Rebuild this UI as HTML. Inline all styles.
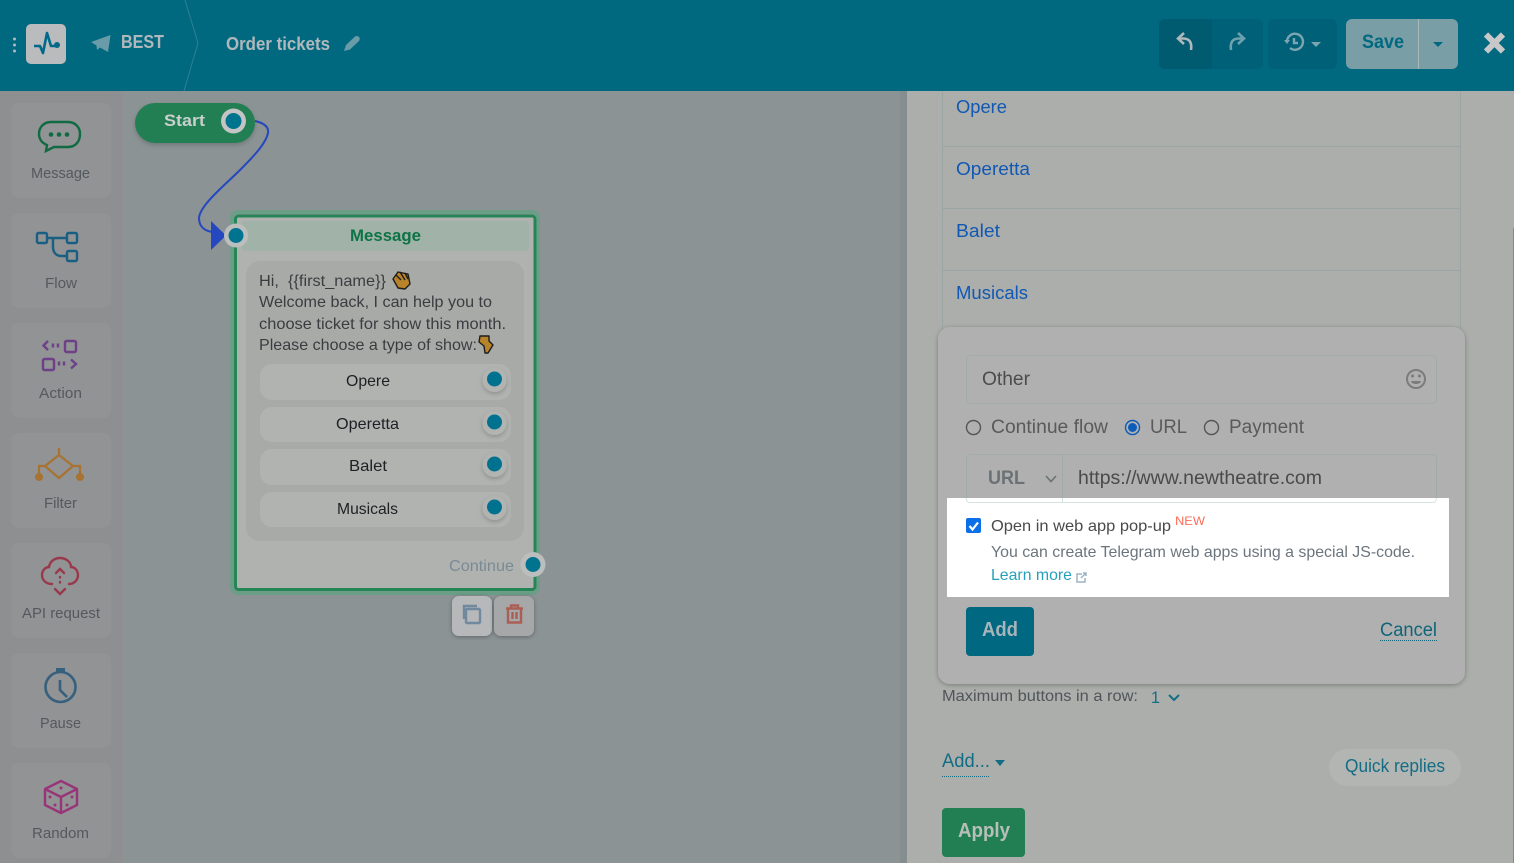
<!DOCTYPE html>
<html><head><meta charset="utf-8"><style>
html,body{margin:0;padding:0;background:#8b9395;overflow:hidden}
svg{display:block;position:absolute;left:0;top:0}
text{font-family:"Liberation Sans",sans-serif;white-space:pre}
.b{font-weight:bold}
.side{font-size:15px;fill:#54595d}
.flab{font-size:18px;fill:#1058b4}
</style></head><body>
<svg width="1514" height="863" viewBox="0 0 1514 863" xmlns="http://www.w3.org/2000/svg">
<defs>
<filter id="sh" x="-20%" y="-20%" width="140%" height="140%"><feDropShadow dx="0" dy="2" stdDeviation="2.500" flood-color="#000" flood-opacity=".2"/></filter>
<filter id="sh2" x="-10%" y="-10%" width="120%" height="120%"><feDropShadow dx="0" dy="1" stdDeviation="2.500" flood-color="#000" flood-opacity=".3"/></filter>
</defs>
<!-- canvas -->
<rect width="1514" height="863" fill="#8b9395"/>
<rect x="0" y="91" width="123" height="772" fill="#8d8f91"/>
<g fill="#919395">
<rect x="11" y="103" width="100" height="95" rx="8"/><rect x="11" y="213" width="100" height="95" rx="8"/><rect x="11" y="323" width="100" height="95" rx="8"/><rect x="11" y="433" width="100" height="95" rx="8"/><rect x="11" y="543" width="100" height="95" rx="8"/><rect x="11" y="653" width="100" height="95" rx="8"/><rect x="11" y="763" width="100" height="95" rx="8"/>
</g>
<text class="side" x="31" y="178" textLength="59" lengthAdjust="spacingAndGlyphs">Message</text>
<text class="side" x="45" y="288" textLength="32" lengthAdjust="spacingAndGlyphs">Flow</text>
<text class="side" x="39" y="398" textLength="43" lengthAdjust="spacingAndGlyphs">Action</text>
<text class="side" x="44" y="508" textLength="33" lengthAdjust="spacingAndGlyphs">Filter</text>
<text class="side" x="22" y="618" textLength="78" lengthAdjust="spacingAndGlyphs">API request</text>
<text class="side" x="40" y="728" textLength="41" lengthAdjust="spacingAndGlyphs">Pause</text>
<text class="side" x="32" y="838" textLength="57" lengthAdjust="spacingAndGlyphs">Random</text>
<!-- sidebar icons -->
<g fill="none" stroke="#106b42" stroke-width="2.400"><path d="M51 122H68C75 122 80 127 80 134C80 142 75 147 68 147H54L46 151L47 145C42 143 39 139 39 134C39 127 44 122 51 122Z"/></g>
<g fill="#106b42"><circle cx="51" cy="134.500" r="2.300"/><circle cx="59" cy="134.500" r="2.300"/><circle cx="67" cy="134.500" r="2.300"/></g>
<g fill="none" stroke="#195f83" stroke-width="2.400"><rect x="37" y="233" width="10" height="10" rx="1.500"/><rect x="67" y="233" width="10" height="10" rx="1.500"/><rect x="67" y="251" width="10" height="10" rx="1.500"/><path d="M47 238H67M53 238V247C53 252 56 256 61 256H67"/></g>
<g fill="none" stroke="#6d4088" stroke-width="2.400"><rect x="65" y="341" width="11" height="11" rx="1.500"/><rect x="43" y="359" width="11" height="11" rx="1.500"/><path d="M48 341L43.500 345.500L48 350M53 343.500V347.500M58 343.500V347.500M59 361.500V365.500M64 361.500V365.500M71 359.500L76 364L71 368.500"/></g>
<g fill="none" stroke="#a87230" stroke-width="2.200"><path d="M59 448V455M45 466L59 455L73 466L59 478ZM45 466H39V474M73 466H80V474"/></g>
<g fill="#a87230"><circle cx="39" cy="477" r="4"/><circle cx="80" cy="477" r="4"/></g>
<g fill="none" stroke="#983a4c" stroke-width="2.400" stroke-linecap="round"><path d="M52 584C46 584 42 580 42 575C42 570 46 567 49 567C50 561 55 558 60 558C66 558 71 562 71 567C75 567 78 571 78 575C78 580 74 584 69 584"/><path d="M56 573L60 569L64 573M60 577V577.500M60 582V582.500M55 589L60 594L65 589"/></g>
<g fill="none" stroke="#375f7e" stroke-width="2.600"><circle cx="60.500" cy="687" r="15"/><path d="M60 680V690L67 697"/></g><rect x="56" y="668" width="9" height="4" fill="#375f7e"/>
<g fill="none" stroke="#983578" stroke-width="2.400" stroke-linejoin="round"><path d="M61 781L77 789V805L61 813L45 805V789ZM45 789L61 797L77 789M61 797V813"/></g>
<g fill="#983578"><circle cx="61" cy="788" r="1.500"/><circle cx="50" cy="797" r="1.500"/><circle cx="55" cy="805" r="1.500"/><circle cx="67" cy="805" r="1.500"/><circle cx="72" cy="797" r="1.500"/></g>

<!-- flow connector -->
<path d="M255 121C264 123 269 127 268 133C266 143 255 155 240 170C225 185 200 205 199 218C199 226 204 231 213 232" fill="none" stroke="#2547bf" stroke-width="2"/>
<!-- start -->
<rect x="135" y="103" width="120" height="40" rx="20" fill="#217f53" filter="url(#sh)"/>
<text class="b" x="164" y="126" font-size="17" fill="#c8d0cc" textLength="41" lengthAdjust="spacingAndGlyphs">Start</text>
<circle cx="233.500" cy="121" r="12.500" fill="#c4c4c4"/><circle cx="233.500" cy="121" r="8" fill="#00748f"/>
<!-- message node -->
<rect x="232" y="212" width="306" height="381" rx="6" fill="none" stroke="#6b9e86" stroke-width="4"/>
<rect x="235.500" y="216" width="299.500" height="373.500" rx="3" fill="#b0b2b0" stroke="#268557" stroke-width="3"/>
<rect x="242" y="221" width="287" height="30" rx="3" fill="#a1b3a9"/>
<text class="b" x="350" y="241" font-size="17" fill="#0e7344" textLength="71" lengthAdjust="spacingAndGlyphs">Message</text>
<rect x="246" y="261" width="278" height="280" rx="14" fill="#a8aaa8"/>
<g font-size="16" fill="#3c3c40">
<text x="259" y="286" textLength="127" lengthAdjust="spacingAndGlyphs">Hi,  {{first_name}}</text>
<text x="259" y="307" textLength="233" lengthAdjust="spacingAndGlyphs">Welcome back, I can help you to</text>
<text x="259" y="329" textLength="247" lengthAdjust="spacingAndGlyphs">choose ticket for show this month.</text>
<text x="259" y="350" textLength="218" lengthAdjust="spacingAndGlyphs">Please choose a type of show:</text>
</g>
<!-- clap emoji -->
<g stroke="#1d1d1d" stroke-width="1.400" stroke-linejoin="round"><path d="M393 279L398 272L408 274L410 284L405 289L398 288Z" fill="#b9832a"/><path d="M396 275L401 280M400 272L405 280M405 273L408 279" fill="none"/></g>
<!-- point emoji -->
<path d="M480 336H489V341L493 345L488 353H485L484 346L479 342Z" fill="#b9832a" stroke="#1d1d1d" stroke-width="1.400" stroke-linejoin="round"/>
<!-- buttons -->
<g fill="#b1b3b1"><rect x="260" y="364" width="251" height="36" rx="12"/><rect x="260" y="407" width="251" height="35" rx="12"/><rect x="260" y="449" width="251" height="36" rx="12"/><rect x="260" y="492" width="251" height="35" rx="12"/></g>
<g font-size="16" fill="#1f1f24">
<text x="346" y="386" textLength="44" lengthAdjust="spacingAndGlyphs">Opere</text>
<text x="336" y="429" textLength="63" lengthAdjust="spacingAndGlyphs">Operetta</text>
<text x="349" y="471" textLength="38" lengthAdjust="spacingAndGlyphs">Balet</text>
<text x="337" y="514" textLength="61" lengthAdjust="spacingAndGlyphs">Musicals</text>
</g>
<g fill="#b2b4b2" filter="url(#sh)"><circle cx="494.500" cy="380" r="12"/><circle cx="494.500" cy="423" r="12"/><circle cx="494.500" cy="465" r="12"/><circle cx="494.500" cy="508" r="12"/></g>
<g fill="#00728f"><circle cx="494.500" cy="379" r="7.500"/><circle cx="494.500" cy="422" r="7.500"/><circle cx="494.500" cy="464" r="7.500"/><circle cx="494.500" cy="507" r="7.500"/></g>
<text x="449" y="571" font-size="16" fill="#7a8a94" textLength="65" lengthAdjust="spacingAndGlyphs">Continue</text>
<circle cx="533" cy="564.500" r="12.500" fill="#bcbebe"/><circle cx="533" cy="564.500" r="7.500" fill="#00748f"/>
<path d="M211 221L226 235.500L211 250Z" fill="#2547bf"/>
<circle cx="236" cy="235.500" r="12" fill="#bcbebe"/><circle cx="236" cy="235.500" r="7.500" fill="#00748f"/>
<!-- copy / delete -->
<rect x="452" y="596" width="40" height="40" rx="7" fill="#b6b8b9" filter="url(#sh2)"/>
<rect x="494" y="596" width="40" height="40" rx="7" fill="#a5a7a8" filter="url(#sh2)"/>
<g fill="none" stroke="#71899e" stroke-width="2.400"><rect x="466" y="609" width="14" height="14" rx="1"/><path d="M464 619V606H477"/></g>
<g fill="none" stroke="#ab5e54" stroke-width="2.400"><path d="M506 608.500H523M511 608V605.500H518V608M508 609V622.500H521V609M512.500 612V619M516.500 612V619"/></g>

<!-- right panel -->
<rect x="900" y="91" width="7" height="772" fill="#858d8f"/>
<rect x="907" y="91" width="607" height="772" fill="#acaeac"/>
<rect x="1513" y="228" width="1" height="635" fill="#858787"/>
<g stroke="#9aa5a5" stroke-width="1"><path d="M942.500 91V330M1460.500 91V330M942 146.500H1461M942 208.500H1461M942 270.500H1461" fill="none"/></g>
<text class="flab" x="956" y="113" textLength="51" lengthAdjust="spacingAndGlyphs">Opere</text>
<text class="flab" x="956" y="175" textLength="74" lengthAdjust="spacingAndGlyphs">Operetta</text>
<text class="flab" x="956" y="237" textLength="44" lengthAdjust="spacingAndGlyphs">Balet</text>
<text class="flab" x="956" y="299" textLength="72" lengthAdjust="spacingAndGlyphs">Musicals</text>
<!-- lower panel -->
<text x="942" y="701" font-size="16" fill="#4f5558" textLength="196" lengthAdjust="spacingAndGlyphs">Maximum buttons in a row:</text>
<text x="1151" y="703" font-size="17" fill="#126d85" textLength="9" lengthAdjust="spacingAndGlyphs">1</text>
<path d="M1169 695L1174 700L1179 695" fill="none" stroke="#126d85" stroke-width="2"/>
<text x="942" y="767" font-size="19" fill="#136d84" textLength="48" lengthAdjust="spacingAndGlyphs">Add...</text>
<path d="M942 776.500H990" stroke="#136d84" stroke-dasharray="1 1"/>
<path d="M995 760H1005L1000 766Z" fill="#136d84"/>
<rect x="1329" y="749" width="132" height="37" rx="18.500" fill="#b3b5b3"/>
<text x="1345" y="772" font-size="18" fill="#136d84" textLength="100" lengthAdjust="spacingAndGlyphs">Quick replies</text>
<rect x="942" y="808" width="83" height="49" rx="4" fill="#217f53"/>
<text class="b" x="958" y="837" font-size="20" fill="#b8bfb8" textLength="52" lengthAdjust="spacingAndGlyphs">Apply</text>
<!-- modal -->
<rect x="938" y="327" width="527" height="357" rx="12" fill="#b0b0b0" filter="url(#sh2)"/>
<rect x="966.500" y="355.500" width="470" height="48" rx="4" fill="none" stroke="#a1aca9"/>
<text x="982" y="385" font-size="19" fill="#4c4c4c" textLength="48" lengthAdjust="spacingAndGlyphs">Other</text>
<g fill="none" stroke="#7c7c7c" stroke-width="2"><circle cx="1416" cy="379" r="9"/></g>
<g fill="#7c7c7c"><circle cx="1412.500" cy="376" r="1.500"/><circle cx="1419.500" cy="376" r="1.500"/><path d="M1411 381H1421C1420.500 385 1411.500 385 1411 381Z"/></g>
<g fill="none" stroke="#555" stroke-width="1.400"><circle cx="973.500" cy="427.500" r="7"/><circle cx="1211.500" cy="427.500" r="7"/></g>
<circle cx="1132.500" cy="427.500" r="7" fill="none" stroke="#0d5cb8" stroke-width="1.400"/><circle cx="1132.500" cy="427.500" r="4.500" fill="#0d5cb8"/>
<g font-size="19" fill="#5a5a5a">
<text x="991" y="433" textLength="117" lengthAdjust="spacingAndGlyphs">Continue flow</text>
<text x="1150" y="433" textLength="37" lengthAdjust="spacingAndGlyphs">URL</text>
<text x="1229" y="433" textLength="75" lengthAdjust="spacingAndGlyphs">Payment</text>
</g>
<path d="M971 454.500H1432Q1436.500 454.500 1436.500 459V498M966.500 498V459Q966.500 454.500 971 454.500M1062.500 454.500V498" fill="none" stroke="#a1aca9"/>
<text class="b" x="988" y="484" font-size="19" fill="#6b7275" textLength="37" lengthAdjust="spacingAndGlyphs">URL</text>
<path d="M1046 476L1051 481.500L1056 476" fill="none" stroke="#6b7275" stroke-width="1.600"/>
<text x="1078" y="484" font-size="19" fill="#4a4a4a" textLength="244" lengthAdjust="spacingAndGlyphs">https://www.newtheatre.com</text>
<!-- highlighted -->
<rect x="947" y="498" width="502" height="99" fill="#fff"/>
<path d="M966.500 498V499Q966.500 502.500 970 502.500H1432Q1436.500 502.500 1436.500 498M1062.500 498V502" fill="none" stroke="#d5e3e0"/>
<rect x="966" y="518" width="15" height="15" rx="2" fill="#0b6fe8"/>
<path d="M969.500 526L972.500 529.500L978 522.500" fill="none" stroke="#fff" stroke-width="2.200"/>
<text x="991" y="531" font-size="16" fill="#4a4a4a" textLength="180" lengthAdjust="spacingAndGlyphs">Open in web app pop-up</text>
<text x="1175" y="525" font-size="12" fill="#ff6e5c" textLength="30" lengthAdjust="spacingAndGlyphs">NEW</text>
<text x="991" y="557" font-size="16" fill="#6c757d" textLength="424" lengthAdjust="spacingAndGlyphs">You can create Telegram web apps using a special JS-code.</text>
<text x="991" y="580" font-size="16" fill="#26a0bb" textLength="81" lengthAdjust="spacingAndGlyphs">Learn more</text>
<g fill="none" stroke="#9db3c4" stroke-width="1.500"><path d="M1082 574H1077V582H1085V578"/><path d="M1081 578L1086 573M1083 573H1086V576"/></g>
<rect x="966" y="607" width="68" height="49" rx="4" fill="#006880"/>
<text class="b" x="982" y="636" font-size="20" fill="#a7b5ba" textLength="36" lengthAdjust="spacingAndGlyphs">Add</text>
<text x="1380" y="636" font-size="19" fill="#106479" textLength="57" lengthAdjust="spacingAndGlyphs">Cancel</text>
<path d="M1380 640.500H1437" stroke="#106479" stroke-dasharray="1 1"/>

<!-- header -->
<rect width="1514" height="91" fill="#006980"/>
<path d="M185 0L198 43L184 91" fill="none" stroke="#2f7f92" stroke-width="1"/>
<g fill="#b0b8bb"><circle cx="14.500" cy="39" r="1.500"/><circle cx="14.500" cy="45" r="1.500"/><circle cx="14.500" cy="51" r="1.500"/></g>
<rect x="26" y="24" width="40" height="40" rx="5" fill="#b9bbbc"/>
<path d="M34 46H40L43 53L47 33L51 46H57" fill="none" stroke="#00698a" stroke-width="2.600" stroke-linejoin="round"/><circle cx="57" cy="45" r="3" fill="#00698a"/>
<path d="M91 42L110.500 35L108 52L100 47.500L97 50L96.500 45.500Z" fill="#6a9ba8"/>
<text class="b" x="121" y="48" font-size="18" fill="#b0b8bb" textLength="43" lengthAdjust="spacingAndGlyphs">BEST</text>
<text class="b" x="226" y="50" font-size="18" fill="#b0b8bb" textLength="104" lengthAdjust="spacingAndGlyphs">Order tickets</text>
<path d="M344 51L346 45L355 36.500C356.500 35.500 358 36 359 37C360 38 360 39.500 359 41L350 49.500Z" fill="#6a9ba8"/>
<rect x="1159" y="19" width="104" height="50" rx="6" fill="#006077"/>
<path d="M1165 19H1212V69H1165A6 6 0 0 1 1159 63V25A6 6 0 0 1 1165 19Z" fill="#005a70"/>
<rect x="1268" y="19" width="69" height="50" rx="6" fill="#006077"/>
<path d="M1191 50C1192 43 1190 38.500 1183 38.500H1179" fill="none" stroke="#b0b8bb" stroke-width="2.600"/><path d="M1184 33L1178 38.500L1184 44" fill="none" stroke="#b0b8bb" stroke-width="2.600"/>
<path d="M1231 50C1230 43 1232 38.500 1239 38.500H1243" fill="none" stroke="#6fa0ad" stroke-width="2.600"/><path d="M1238 33L1244 38.500L1238 44" fill="none" stroke="#6fa0ad" stroke-width="2.600"/>
<g fill="none" stroke="#7ba5b0" stroke-width="2.400"><path d="M1287 42A8 8 0 1 1 1290 48"/><path d="M1294 38V43H1298"/></g><path d="M1284 40H1290L1287 44Z" fill="#7ba5b0"/>
<path d="M1311 42H1321L1316 47Z" fill="#7ba5b0"/>
<rect x="1346" y="19" width="112" height="50" rx="6" fill="#7a9ea6"/>
<rect x="1418" y="19" width="1" height="50" fill="#aab8ba"/>
<text class="b" x="1362" y="48" font-size="19" fill="#006980" textLength="42" lengthAdjust="spacingAndGlyphs">Save</text>
<path d="M1433 42H1443L1438 47Z" fill="#006980"/>
<path d="M1486 34.500L1503 51.500M1503 34.500L1486 51.500" stroke="#c8c8c8" stroke-width="6"/>
</svg>
</body></html>
